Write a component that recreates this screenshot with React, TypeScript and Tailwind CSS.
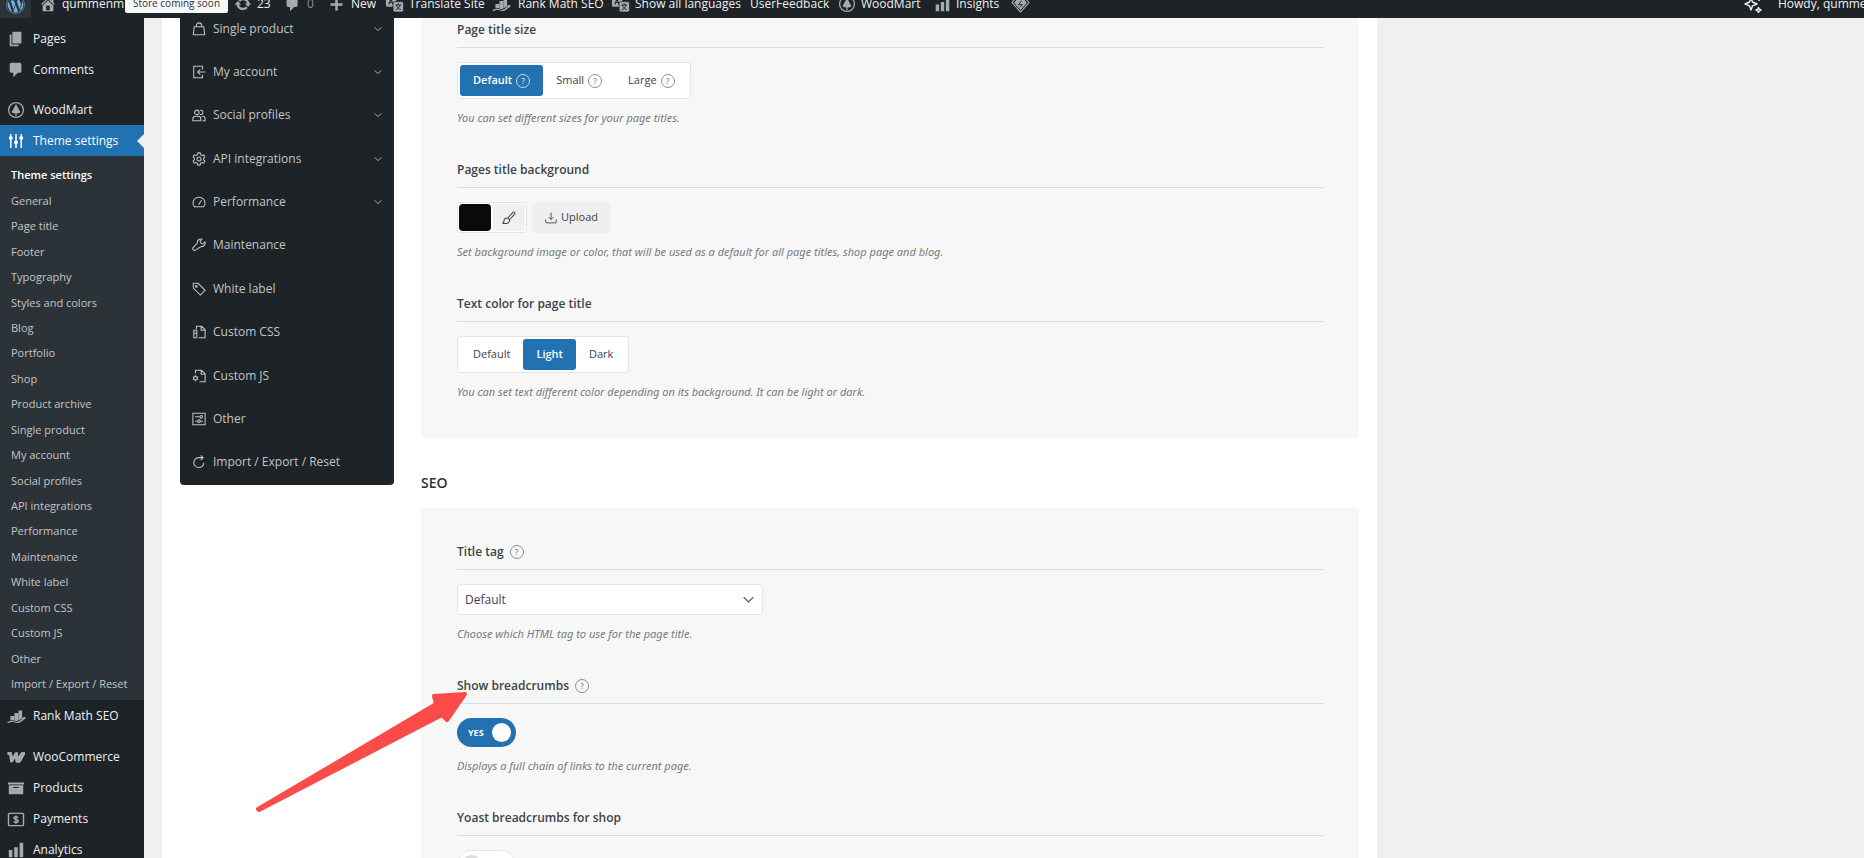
import { FC, ReactNode } from "react";
import { FaWordpress } from "react-icons/fa";

interface IconProps {
    className?: string;
}

const DASH = {
    home: "M16 8.5l1.53 1.53-1.06 1.06L10 4.6l-6.47 6.49-1.06-1.06L10 2.5l4 4v-2h2v4zm-6-2.46l6 5.99V18H4v-5.97zM12 17v-5H8v5h4z",
    comment: "M5 2h9c1.1 0 2 .9 2 2v7c0 1.1-.9 2-2 2h-2l-5 5v-5H5c-1.1 0-2-.9-2-2V4c0-1.1.9-2 2-2z",
    update: "M10.2 3.28c3.53 0 6.43 2.61 6.92 6h2.08l-3.5 4-3.5-4h2.32c-.45-1.97-2.21-3.45-4.32-3.45-1.45 0-2.73.71-3.54 1.78L4.95 5.66C6.23 4.2 8.11 3.28 10.2 3.28zm-.4 13.44c-3.52 0-6.43-2.61-6.92-6H.8l3.5-4c1.17 1.33 2.33 2.67 3.5 4H5.48c.45 1.97 2.21 3.45 4.32 3.45 1.45 0 2.73-.71 3.54-1.78l1.71 1.95c-1.28 1.46-3.15 2.38-5.25 2.38z",
    plus: "M17 8.5v3h-5.500v5.500h-3v-5.500H3v-3h5.500V3h3v5.500z",
    pages: "M6 15V2h10v13H6zm-1 1h8v2H3V5h2v11z",
    bars: "M18 18V2h-4v16h4zm-6 0V7H8v11h4zm-6 0v-8H2v8h4z",
    archive: "M19 4v2H1V4h18zM2 7h16v10H2V7zm11 3V9H7v1h6z",
};

const Dash: FC<{ name: keyof typeof DASH } & IconProps> = ({ name, className = "size-[18px]" }) => (
    <svg viewBox="0 0 20 20" className={`${className} flex-none fill-current`} aria-hidden="true">
        <path d={DASH[name]} />
    </svg>
);

const Line: FC<{ children: ReactNode } & IconProps> = ({ children, className = "size-[14px]" }) => (
    <svg viewBox="0 0 16 16" className={`${className} flex-none`} fill="none" stroke="currentColor" strokeWidth="1.2" aria-hidden="true">
        {children}
    </svg>
);

const WoodMartIcon: FC = () => (
    <svg viewBox="0 0 18 18" className="size-[18px] flex-none" aria-hidden="true">
        <circle cx="9" cy="9" r="7.400" fill="none" stroke="currentColor" strokeWidth="1.300" />
        <path d="M9 3l4.500 8.200c-1.200.9-2.500 1.300-3.900 1.400V15H8.400v-2.400c-1.400-.1-2.700-.5-3.900-1.400z" fill="currentColor" />
    </svg>
);

const SlidersIcon: FC = () => (
    <svg viewBox="0 0 18 18" className="size-[18px] flex-none fill-current" aria-hidden="true">
        <path d="M3 2h1.500v14H3zM8.250 2h1.500v14h-1.500zM13.500 2H15v14h-1.500z" />
        <circle cx="3.750" cy="6" r="2" />
        <circle cx="9" cy="10.500" r="2" />
        <circle cx="14.250" cy="6" r="2" />
    </svg>
);

const RankMathIcon: FC = () => (
    <svg viewBox="0 0 20 16" className="h-[15px] w-[19px] flex-none fill-current" aria-hidden="true">
        <path d="M3.500 7.500h4V12l-4-.4zM7.800 4.200h4v8.200c-1.200.6-2.600.5-4 0zM12.100 1.500H16v8.600l-3.900 2z" />
        <path d="M.5 13.600c2-.2 3.500-1.600 5.500-1.200 2.400.5 3.400 2 6 1 2.200-.8 3.400-2.400 5-4l-.9-.3 3.500-.9-.6 3.300-.7-.8c-1.700 1.900-3.300 3.400-5.900 4.200-3 .7-4.400-1.200-6.600-1.200-1.800 0-3 1.400-5.300 1.100z" />
    </svg>
);

const WooIcon: FC = () => (
    <svg viewBox="0 0 20 14" className="h-[13px] w-[18px] flex-none" fill="none" stroke="currentColor" strokeWidth="3.400" strokeLinejoin="round" aria-hidden="true">
        <path d="M.5 2.500h3.500l1 8.500 5.500-8.500.5 8.500 6-8.500h3" />
        <path d="M18.500 2.500L14 11l-3 0" />
    </svg>
);

const PaymentsIcon: FC = () => (
    <svg viewBox="0 0 18 16" className="h-[15px] w-[18px] flex-none" fill="none" stroke="currentColor" strokeWidth="1.500" aria-hidden="true">
        <rect x="1" y="1.500" width="16" height="13" rx="1" />
        <path d="M11.300 6.100c-.4-.9-1.300-1.200-2.300-1.200-1.300 0-2.200.5-2.200 1.500 0 2.300 4.500.9 4.500 3.200 0 1-.9 1.500-2.300 1.500-1.200 0-2.100-.4-2.500-1.300M9 3.600v8.800" />
    </svg>
);

const TranslateIcon: FC = () => (
    <svg viewBox="0 0 20 18" className="h-[18px] w-[19px] flex-none" aria-hidden="true">
        <rect x="1" y="1" width="11" height="11" rx="2" fill="currentColor" />
        <path d="M4 9.500l2.300-6 2.200 6M4.800 7.500h3" fill="none" stroke="#1d2327" strokeWidth="1.100" />
        <rect x="8.500" y="6.500" width="11" height="11" rx="2" fill="currentColor" stroke="#1d2327" strokeWidth=".8" />
        <path d="M11 10h6M14 8.500V10M16 10c-.6 2.300-2.400 4.200-4.700 5M12 10c.6 2.300 2.400 4.200 4.700 5" fill="none" stroke="#1d2327" />
    </svg>
);

const GemIcon: FC = () => (
    <svg viewBox="0 0 20 18" className="h-[17px] w-[19px] flex-none" fill="none" stroke="currentColor" strokeWidth="1.200" strokeLinejoin="round" aria-hidden="true">
        <path d="M5 2h10l4 5-9 10L1 7z" />
        <path d="M6.500 4h7l2.500 3.200L10 14 4 7.200z" fill="currentColor" />
        <path d="M11 5L8 9.200h4L9.500 12" stroke="#1d2327" strokeWidth="1" />
    </svg>
);

const SparkleIcon: FC = () => (
    <svg viewBox="0 0 18 18" className="size-[18px] flex-none" fill="none" stroke="currentColor" strokeWidth="1.400" strokeLinejoin="round" aria-hidden="true">
        <path d="M7 3l1.500 4L13 9l-4.500 1.800L7 15l-1.500-4.200L1 9l4.500-2zM14.500 12.500l.8 1.700 1.700.8-1.700.8-.8 1.700-.8-1.700-1.700-.8 1.700-.8zM15 4v2" />
    </svg>
);

const HelpIcon: FC<IconProps> = ({ className = "text-[#8c8f94]" }) => (
    <span className={`flex size-[14px] flex-none items-center justify-center rounded-full border border-current text-[8px] leading-none font-semibold ${className}`}>?</span>
);

interface BarItemProps {
    width: string;
    icon?: ReactNode;
    label?: string;
    gap?: string;
    muted?: boolean;
}

const BarItem: FC<BarItemProps> = ({ width, icon, label, gap = "gap-[6px]", muted }) => (
    <a href="#" className={`flex h-full flex-none items-center whitespace-nowrap ${gap} ${width}`}>
        {icon && <span className="flex text-[#a7aaad]">{icon}</span>}
        {label && <span className={muted ? "text-[#8c8f94]" : ""}>{label}</span>}
    </a>
);

const AdminBar: FC = () => (
    <header className="h-[18px] flex-none overflow-hidden bg-[#1d2327] text-xs text-[#f0f0f1]">
        <div className="-mt-[11px] flex h-[30px] items-center">
            <a href="#" aria-label="About WordPress" className="mr-[8px] flex h-full w-[31px] flex-none items-center justify-center bg-[#2c3338] text-[#72aee6]">
                <FaWordpress className="size-[19px]" />
            </a>
            <BarItem width="w-[86px]" icon={<Dash name="home" />} label="qummenm" gap="gap-[5px]" />
            <a href="#" className="mr-[6px] flex h-[17px] w-[103px] flex-none items-center justify-center rounded-[2px] bg-[#f6f7f7] text-[10px] font-medium whitespace-nowrap text-[#2c3338]">Store coming soon</a>
            <BarItem width="w-[50px]" icon={<Dash name="update" />} label="23" gap="gap-[5px]" />
            <BarItem width="w-[44px]" icon={<Dash name="comment" className="size-[17px]" />} label="0" muted />
            <BarItem width="w-[57px]" icon={<Dash name="plus" className="size-[17px]" />} label="New" />
            <BarItem width="w-[107px]" icon={<TranslateIcon />} label="Translate Site" gap="gap-[5px]" />
            <BarItem width="w-[119px]" icon={<RankMathIcon />} label="Rank Math SEO" gap="gap-[7px]" />
            <BarItem width="w-[139px]" icon={<TranslateIcon />} label="Show all languages" gap="gap-[5px]" />
            <BarItem width="w-[88px]" label="UserFeedback" />
            <BarItem width="w-[96px]" icon={<WoodMartIcon />} label="WoodMart" gap="gap-[5px]" />
            <BarItem width="w-[77px]" icon={<Dash name="bars" className="size-[17px]" />} label="Insights" gap="gap-[5px]" />
            <BarItem width="w-[40px]" icon={<GemIcon />} />
            <a href="#" aria-label="Assistant" className="ml-auto flex h-full flex-none items-center pr-[16px]">
                <SparkleIcon />
            </a>
            <a href="#" className="flex h-full w-[86px] flex-none items-center overflow-hidden whitespace-nowrap">Howdy, qummenm</a>
        </div>
    </header>
);

const MenuItem: FC<{ icon: ReactNode; label: string }> = ({ icon, label }) => (
    <li>
        <a href="#" className="flex h-[31px] items-center gap-[8px] pt-px pl-[7px]">
            <span className="flex w-[18px] justify-center text-[#a7aaad]">{icon}</span>
            {label}
        </a>
    </li>
);

const submenu = [
    "Theme settings", "General", "Page title", "Footer", "Typography", "Styles and colors", "Blog",
    "Portfolio", "Shop", "Product archive", "Single product", "My account", "Social profiles",
    "API integrations", "Performance", "Maintenance", "White label", "Custom CSS", "Custom JS",
    "Other", "Import / Export / Reset",
];

const AdminMenu: FC = () => (
    <aside className="w-[144px] flex-none overflow-hidden bg-[#1d2327] pt-[5px] text-xs text-[#f0f0f1]">
        <ul>
            <MenuItem icon={<Dash name="pages" />} label="Pages" />
            <MenuItem icon={<Dash name="comment" />} label="Comments" />
        </ul>
        <ul className="mt-[9px]">
            <MenuItem icon={<WoodMartIcon />} label="WoodMart" />
            <li>
                <a href="#" className="relative flex h-[31px] items-center gap-[8px] bg-[#2271b1] pt-px pl-[7px] text-white">
                    <SlidersIcon />
                    Theme settings
                    <span className="absolute top-1/2 right-0 -translate-y-1/2 border-y-[7px] border-r-[7px] border-y-transparent border-r-[#f0f0f0]"></span>
                </a>
                <ul className="grid h-[544px] auto-rows-fr bg-[#2c3338] pt-[7px] pb-[3px] text-[11px] text-[#c3c4c7]">
                    {submenu.map((label, index) => (
                        <li key={label} className="flex items-center">
                            <a href="#" className={`pl-[11px] whitespace-nowrap ${index === 0 ? "font-semibold text-white" : ""}`}>{label}</a>
                        </li>
                    ))}
                </ul>
            </li>
            <MenuItem icon={<RankMathIcon />} label="Rank Math SEO" />
        </ul>
        <ul className="mt-[10px]">
            <MenuItem icon={<WooIcon />} label="WooCommerce" />
            <MenuItem icon={<Dash name="archive" />} label="Products" />
            <MenuItem icon={<PaymentsIcon />} label="Payments" />
            <MenuItem icon={<Dash name="bars" />} label="Analytics" />
        </ul>
    </aside>
);

interface Section {
    label: string;
    icon: ReactNode;
    open?: boolean;
}

const sections: Section[] = [
    { label: "Single product", open: true, icon: <path d="M2.500 5.500h11l1 9h-13zM5 5.500V4a3 3 0 016 0v1.500" /> },
    { label: "My account", open: true, icon: <path d="M12 5V1.500H2v13h10V11M15.500 8H6.500M9.500 5l-3 3 3 3" /> },
    { label: "Social profiles", open: true, icon: <><circle cx="5.500" cy="5" r="2.600" /><path d="M1 14.500v-2c0-2 1.500-3 3-3h3c1.500 0 3 1 3 3v2zM9 2.700a2.500 2.500 0 110 4.600M11 9.500h1c1.500 0 3 1 3 3v2h-3" /></> },
    { label: "API integrations", open: true, icon: <><path d="M6.700 1h2.600l.5 2 1.600.9 2-.6 1.300 2.300-1.400 1.500v1.800l1.400 1.500-1.300 2.300-2-.6-1.600.9-.5 2H6.700l-.5-2-1.600-.9-2 .6-1.300-2.300 1.400-1.500V7.100L1.300 5.600l1.300-2.300 2 .6L6.200 3z" /><circle cx="8" cy="8" r="2.300" /></> },
    { label: "Performance", open: true, icon: <path d="M2.800 13.500A6.700 6.700 0 018 2.500a6.700 6.700 0 015.200 11zM7.500 11l3.500-5" /> },
    { label: "Maintenance", icon: <path d="M10.500 9.800a4 4 0 004.300-5.300L12.500 6.800l-2.300-.9-.9-2.300 2.200-2.300a4 4 0 00-5.300 4.400L1.500 10.800c-.8.800-.8 2 0 2.800s2 .8 2.800 0z" /> },
    { label: "White label", icon: <><path d="M1.500 1.500h5.500l8 8-5.500 5.500-8-8z" /><circle cx="5" cy="5" r="1" /></> },
    { label: "Custom CSS", icon: <path d="M5 4.500v-3h6l4 4v9H7.500M10.500 1.500V6H15M5.500 7V6H2v3.500h3.500V7M2 9.500v5h3.500v-5" /> },
    { label: "Custom JS", icon: <><path d="M4 5V1.500h7l4 4v9H8.500M10.500 1.500V6H15" /><circle cx="4" cy="10.500" r="2" /><path d="M4 7v1.500M4 12.500V14M1 8.800l1.300.8M5.700 11.400l1.300.8M7 8.800l-1.300.8M2.300 11.400l-1.300.8" /></> },
    { label: "Other", icon: <><path d="M1 1.500h14v13H1zM3.500 5.500h5M3.500 10.500h3M9.500 10.500h3" /><circle cx="10.500" cy="5.500" r="1.500" /><circle cx="8" cy="10.500" r="1.500" /></> },
    { label: "Import / Export / Reset", icon: <path d="M13.500 9A5.700 5.700 0 118 3h4.500M10 .5L12.700 3 10 5.500" /> },
];

const OptionsNav: FC = () => (
    <nav className="-mt-[12px] w-[214px] flex-none self-start rounded-b-[4px] bg-[#1d2327] pt-px pb-px">
        <ul className="grid h-[477px] auto-rows-fr text-xs text-[#c3c4c7]">
            {sections.map(({ label, icon, open }) => (
                <li key={label}>
                    <a href="#" className="flex h-full items-center gap-[7px] px-[12px]">
                        <Line>{icon}</Line>
                        <span className="flex-1">{label}</span>
                        {open && <Line className="size-[8px]"><path d="M1 5l7 6 7-6" strokeWidth="1.600" /></Line>}
                    </a>
                </li>
            ))}
        </ul>
    </nav>
);

interface FieldProps {
    title: string;
    htmlFor?: string;
    help?: boolean;
    note?: string;
    line?: string;
    children: ReactNode;
}

const Field: FC<FieldProps> = ({ title, htmlFor, help, note, line = "border-[#dcdcde]", children }) => (
    <div>
        <div className={`mb-[14px] flex h-[30px] items-start gap-[6px] border-b text-xs leading-[24px] font-semibold text-[#3c434a] ${line}`}>
            {htmlFor ? <label htmlFor={htmlFor}>{title}</label> : <h4>{title}</h4>}
            {help && <span className="flex h-[24px] items-center"><HelpIcon /></span>}
        </div>
        {children}
        {note && <p className="mt-[9px] font-['Noto_Sans',sans-serif] text-[11px] leading-[20px] text-[#777a7e] italic">{note}</p>}
    </div>
);

const Choices: FC<{ items: string[]; active: string; help?: boolean }> = ({ items, active, help }) => (
    <div className="flex h-[37px] w-fit rounded-[3px] border border-[#e5e5e6] bg-white p-[2px] text-[11px] text-[#3c434a]">
        {items.map((item) => (
            <button
                key={item}
                type="button"
                className={`flex items-center gap-[4px] rounded-[3px] px-[13px] ${item === active ? "bg-[#2271b1] font-semibold text-white" : "font-medium"}`}
            >
                {item}
                {help && <HelpIcon className={item === active ? "text-[#c5dcee]" : "text-[#8c8f94]"} />}
            </button>
        ))}
    </div>
);

const OptionsForm: FC = () => (
    <div className="-mt-[32px] min-w-0 flex-1">
        <section className="flex flex-col gap-[30px] rounded-[4px] bg-[#f7f7f7] px-[36px] pt-[32px] pb-[36px]">
            <Field title="Page title size" note="You can set different sizes for your page titles.">
                <Choices items={["Default", "Small", "Large"]} active="Default" help />
            </Field>
            <Field title="Pages title background" note="Set background image or color, that will be used as a default for all page titles, shop page and blog.">
                <div className="flex h-[31px] gap-[5px] text-[11px] font-medium text-[#3c434a]">
                    <div className="flex gap-[2px] rounded-[3px] border border-[#e5e5e6] bg-white p-[1px]">
                        <button type="button" aria-label="Background color" className="w-[32px] rounded-[4px] bg-[#0a0a0a]"></button>
                        <button type="button" aria-label="Edit color" className="flex w-[32px] items-center justify-center rounded-[3px] bg-[#f0f0f0]">
                            <Line>
                                <path d="M6.500 8L12.500 1.500c1-1 3 .8 2 2L8.500 10M6.500 8c-2-.3-4 .8-4.200 3-.1 1.400-.4 2.400-1.300 3 3 .8 8.300.5 7.500-4z" />
                            </Line>
                        </button>
                    </div>
                    <button type="button" className="flex items-center gap-[4px] rounded-[3px] bg-[#efefef] px-[13px]">
                        <Line className="size-[12px]"><path d="M8 1v9M5 7l3 3 3-3M1 10v3.500c0 .6.400 1 1 1h12c.6 0 1-.4 1-1V10" /></Line>
                        Upload
                    </button>
                </div>
            </Field>
            <Field title="Text color for page title" note="You can set text different color depending on its background. It can be light or dark.">
                <Choices items={["Default", "Light", "Dark"]} active="Light" />
            </Field>
        </section>

        <h3 className="pt-[34px] pb-[15px] text-sm leading-[21px] font-semibold text-[#2c3338]">SEO</h3>

        <section className="flex flex-col gap-[30px] rounded-t-[4px] bg-[#f7f7f7] px-[36px] pt-[32px]">
            <Field title="Title tag" htmlFor="title-tag" help note="Choose which HTML tag to use for the page title.">
                <div className="relative w-[306px]">
                    <select id="title-tag" className="block h-[31px] w-full appearance-none rounded-[3px] border border-[#e5e5e6] bg-white px-[7px] text-xs text-[#3c434a]">
                        <option>Default</option>
                    </select>
                    <span className="pointer-events-none absolute inset-y-0 right-[9px] flex items-center text-[#50575e]">
                        <Line className="size-[11px]"><path d="M1 4.500l7 7 7-7" strokeWidth="1.800" /></Line>
                    </span>
                </div>
            </Field>
            <Field title="Show breadcrumbs" htmlFor="breadcrumbs" help note="Displays a full chain of links to the current page." line="border-[#cfe0ea]">
                <label className="relative flex h-[29px] w-[59px] items-center justify-between rounded-full bg-[#2271b1] pr-[5px] pl-[11px] text-[9px] font-bold text-white">
                    <input id="breadcrumbs" type="checkbox" defaultChecked className="absolute inset-0 opacity-0" />
                    YES
                    <span className="size-[19px] rounded-full bg-white"></span>
                </label>
            </Field>
            <Field title="Yoast breadcrumbs for shop" htmlFor="yoast">
                <label className="relative flex h-[29px] w-[59px] items-center rounded-full border border-[#e5e5e6] bg-white pl-[4px]">
                    <input id="yoast" type="checkbox" className="absolute inset-0 opacity-0" />
                    <span className="size-[19px] rounded-full bg-[#dcdcde]"></span>
                </label>
            </Field>
        </section>
    </div>
);

const PointerArrow: FC = () => (
    <svg viewBox="0 0 212 124" className="pointer-events-none absolute top-[690px] left-[256px] h-[124px] w-[212px]" fill="#f94b48" stroke="#f94b48" strokeWidth="4" strokeLinejoin="round" aria-hidden="true">
        <path d="M2 119L180 14 178 6 209 4 191 30 186 25 3 120z" />
    </svg>
);

const App: FC = () => {
    return (
        <div className="relative flex h-screen flex-col overflow-hidden bg-[#f0f0f0] font-['Open_Sans','Noto_Sans',sans-serif]">
            <AdminBar />
            <div className="flex min-h-0 flex-1">
                <AdminMenu />
                <main className="ml-[18px] flex min-w-0 flex-1 overflow-hidden">
                    <div className="flex w-full max-w-[1215px] gap-[27px] bg-white px-[18px]">
                        <OptionsNav />
                        <OptionsForm />
                    </div>
                </main>
            </div>
            <PointerArrow />
        </div>
    );
};

export default App;
